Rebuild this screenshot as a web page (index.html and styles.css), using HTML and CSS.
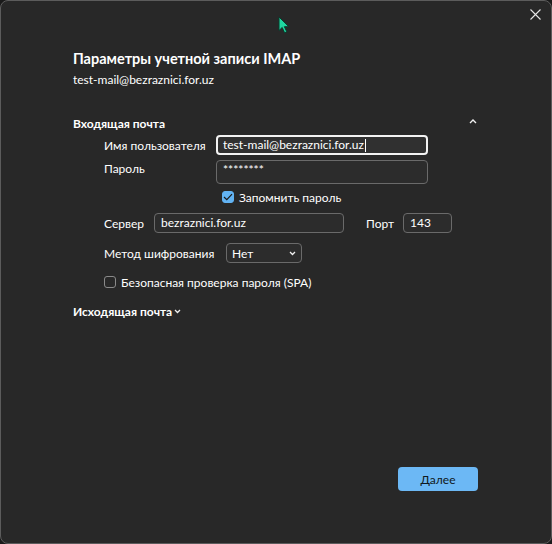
FILE: index.html
```html
<!DOCTYPE html>
<html lang="ru">
<head>
<meta charset="utf-8">
<link rel="stylesheet" href="styles.css">
</head>
<body>
<div class="window">
  <div class="topbar">
    <button class="close" aria-label="Закрыть">
      <svg width="11" height="11" viewBox="0 0 11 11"><path d="M0.5 0.5 L10.5 10.5 M10.5 0.5 L0.5 10.5" stroke="#e8e8e8" stroke-width="1.1" fill="none"/></svg>
    </button>
  </div>
  <svg class="cursor" width="14" height="18" viewBox="0 0 14 18"><path d="M1 1 L1 14.5 L4.2 11.5 L6.6 16.8 L8.8 15.8 L6.4 10.7 L10.8 10.7 Z" fill="#1fd6a0" stroke="#0b3a2c" stroke-width="1"/></svg>

  <div class="content">
    <h1 class="title">Параметры учетной записи IMAP</h1>
    <div class="subtitle">test-mail@bezraznici.for.uz</div>

    <div class="section-head">
      <span class="section-title">Входящая почта</span>
      <svg class="chev-up" width="8" height="5" viewBox="0 0 8 5"><path d="M1 4 L4 1 L7 4" stroke="#f0f0f0" stroke-width="1.4" fill="none"/></svg>
    </div>

    <div class="form">
      <div class="row user-row">
        <span class="label wide">Имя пользователя</span>
        <div class="input focused">test-mail@bezraznici.for.uz<span class="caret"></span></div>
      </div>
      <div class="row pass-row">
        <span class="label wide">Пароль</span>
        <div class="input tall">********</div>
      </div>
      <div class="row check-row remember">
        <span class="checkbox checked">
          <svg width="10" height="8" viewBox="0 0 10 8"><path d="M1 4 L3.8 6.6 L9 1.2" stroke="#1a1a1a" stroke-width="1.2" fill="none"/></svg>
        </span>
        <span class="check-label">Запомнить пароль</span>
      </div>
      <div class="row server-row">
        <span class="label server-label">Сервер</span>
        <div class="input server">bezraznici.for.uz</div>
        <span class="label port-label">Порт</span>
        <div class="input port">143</div>
      </div>
      <div class="row method-row">
        <span class="label method-label">Метод шифрования</span>
        <div class="select">
          <span>Нет</span>
          <svg width="7" height="5" viewBox="0 0 7 5"><path d="M1 1 L3.5 3.5 L6 1" stroke="#f0f0f0" stroke-width="1.3" fill="none"/></svg>
        </div>
      </div>
      <div class="row check-row spa">
        <span class="checkbox"></span>
        <span class="check-label">Безопасная проверка пароля (SPA)</span>
      </div>
    </div>

    <div class="section-head out">
      <span class="section-title">Исходящая почта</span>
      <svg class="chev-down" width="7" height="5" viewBox="0 0 7 5"><path d="M1 1 L3.5 3.5 L6 1" stroke="#f0f0f0" stroke-width="1.3" fill="none"/></svg>
    </div>
  </div>

  <div class="footer">
    <button class="primary">Далее</button>
  </div>
</div>
</body>
</html>
```

FILE: styles.css
```css
* { box-sizing: border-box; }
html, body {
  margin: 0;
  background: #1a1a1a;
}
body {
  font-family: Lato, "Noto Sans", sans-serif;
  color: #ffffff;
  font-size: 12px;
}
.window {
  position: relative;
  width: 552px;
  height: 544px;
  background: #282828;
  border: 1px solid #5c5c5c;
  border-radius: 8px;
  display: flex;
  flex-direction: column;
}
.topbar {
  display: flex;
  justify-content: flex-end;
  height: 30px;
  padding: 8px 10px 0 0;
}
.close {
  background: none;
  border: 0;
  padding: 0;
  width: 11px;
  height: 11px;
  display: flex;
}
.cursor {
  position: absolute;
  left: 277px;
  top: 15px;
}
.content {
  padding-left: 72px;
  padding-right: 72px;
  flex: 1;
}
.title {
  margin: 18px 0 0;
  font-size: 14.5px;
  font-weight: 700;
  line-height: 20px;
}
.subtitle {
  margin-top: 3px;
  line-height: 16px;
}
.section-head {
  display: flex;
  align-items: center;
  justify-content: space-between;
  margin-top: 27px;
  height: 16px;
}
.section-head.out {
  justify-content: flex-start;
  gap: 2px;
  margin-top: 11px;
}
.section-title {
  font-weight: 700;
  font-size: 12px;
}
.chev-up { margin-right: 2px; margin-top: -4px; }
.form {
  padding-left: 31px;
  margin-top: 4px;
  display: flex;
  flex-direction: column;
}
.row {
  display: flex;
  align-items: center;
  gap: 10px;
}
.label { white-space: nowrap; flex: none; }
.label.wide { width: 102px; }
.server-label { width: 40px; }
.port-label { width: 27px; margin-left: 12px; }
.method-label { width: 112px; }
.input {
  width: 212px;
  height: 20px;
  border: 1px solid #6a6a6a;
  border-radius: 4px;
  background: #2c2c2c;
  padding: 0 6px;
  line-height: 18px;
  display: flex;
  align-items: center;
  white-space: nowrap;
}
.input.focused {
  border: 2px solid #f2f2f2;
  background: #303030;
  padding: 0 5px;
}
.caret {
  display: inline-block;
  width: 1px;
  height: 13px;
  background: #fff;
  margin-left: 1px;
}
.pass-row { margin-top: 5px; align-items: flex-start; }
.pass-row .label { line-height: 18px; }
.input.tall {
  height: 24px;
  align-items: flex-start;
  line-height: 18px;
}
.check-row { gap: 5px; height: 20px; }
.remember { margin-left: 118px; margin-top: 3px; }
.checkbox {
  width: 12px;
  height: 12px;
  border: 1px solid #8a8a8a;
  border-radius: 3px;
  display: flex;
  align-items: center;
  justify-content: center;
}
.checkbox.checked {
  background: #62b3f3;
  border-color: #62b3f3;
}
.server-row { margin-top: 6px; }
.input.server { width: 190px; }
.input.port { width: 49px; }
.method-row { margin-top: 10px; }
.select {
  width: 76px;
  height: 20px;
  border: 1px solid #6a6a6a;
  border-radius: 4px;
  background: #2c2c2c;
  padding: 0 5px 0 5px;
  display: flex;
  align-items: center;
  justify-content: space-between;
}
.spa { margin-top: 9px; }
.footer {
  display: flex;
  justify-content: flex-end;
  padding: 0 73px 52px 0;
}
.primary {
  width: 80px;
  height: 24px;
  border: 0;
  border-radius: 4px;
  background: #6cb8f5;
  color: #101820;
  font-family: Lato, "Noto Sans", sans-serif;
  font-size: 12px;
}
```
